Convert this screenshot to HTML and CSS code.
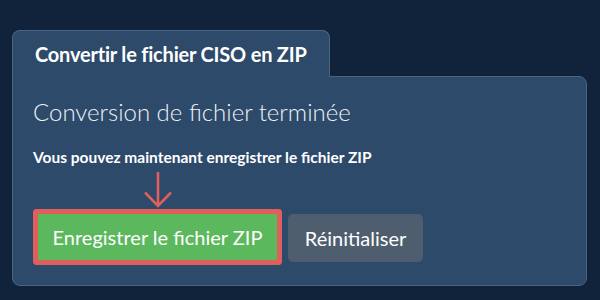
FILE: index.html
```html
<!DOCTYPE html>
<html lang="fr">
<head>
<meta charset="utf-8">
<link rel="stylesheet" href="styles.css">
</head>
<body>
<div class="panel">
  <div class="tab">Convertir le fichier CISO en ZIP</div>
  <div class="card">
    <h2 class="title">Conversion de fichier terminée</h2>
    <p class="msg">Vous pouvez maintenant enregistrer le fichier ZIP</p>
    <div class="actions">
      <div class="save-wrap">
        <svg class="arrow" width="30" height="37" viewBox="0 0 30 37">
          <path d="M15 1 V35 M2 21.5 L15 35 L28 21.5" fill="none" stroke="#de5f5c" stroke-width="2.6" stroke-linecap="butt" stroke-linejoin="miter"/>
        </svg>
        <button class="btn btn-save">Enregistrer le fichier ZIP</button>
      </div>
      <button class="btn btn-reset">Réinitialiser</button>
    </div>
  </div>
</div>
</body>
</html>
```
FILE: styles.css
```css
html, body {
  margin: 0;
  padding: 0;
  background: #11233a;
  width: 600px;
  height: 300px;
  overflow: hidden;
  font-family: Lato, "Open Sans", sans-serif;
  color: #fff;
}
.panel {
  padding: 30px 13px 0 12px;
}
.tab {
  position: relative;
  z-index: 1;
  width: 318px;
  box-sizing: border-box;
  height: 47px;
  margin-bottom: -1px;
  padding: 11px 0 0 22px;
  background: #2d4a6a;
  border: 1px solid #4a6584;
  border-bottom: none;
  border-radius: 8px 8px 0 0;
  font-weight: 700;
  font-size: 20px;
  letter-spacing: -0.2px;
}
.card {
  box-sizing: border-box;
  height: 210px;
  background: #2d4a6a;
  border: 1px solid #4a6584;
  border-radius: 0 8px 8px 8px;
  padding: 20px 20px 0 20px;
}
.title {
  margin: 0;
  font-weight: 300;
  font-size: 24px;
  line-height: 30px;
  color: #eef2f6;
}
.msg {
  margin: 21px 0 0;
  font-weight: 700;
  font-size: 15.5px;
  line-height: 19px;
}
.actions {
  display: flex;
  align-items: flex-end;
  gap: 11px;
  margin-top: 4px;
  padding-left: 5px;
}
.save-wrap {
  display: flex;
  flex-direction: column;
  align-items: center;
}
.arrow {
  display: block;
  margin-bottom: 6px;
}
.btn {
  font-family: Lato, "Open Sans", sans-serif;
  font-size: 20px;
  color: #fff;
  border: none;
  padding: 0;
  cursor: pointer;
}
.btn-save {
  background: #5cb85c;
  width: 239px;
  height: 46px;
  margin-bottom: 2px;
  box-shadow: 0 0 0 5px #de5f5c;
  border-radius: 1px;
}
.btn-reset {
  background: #4e5e6f;
  width: 135px;
  height: 48px;
  border-radius: 5px;
}
```
